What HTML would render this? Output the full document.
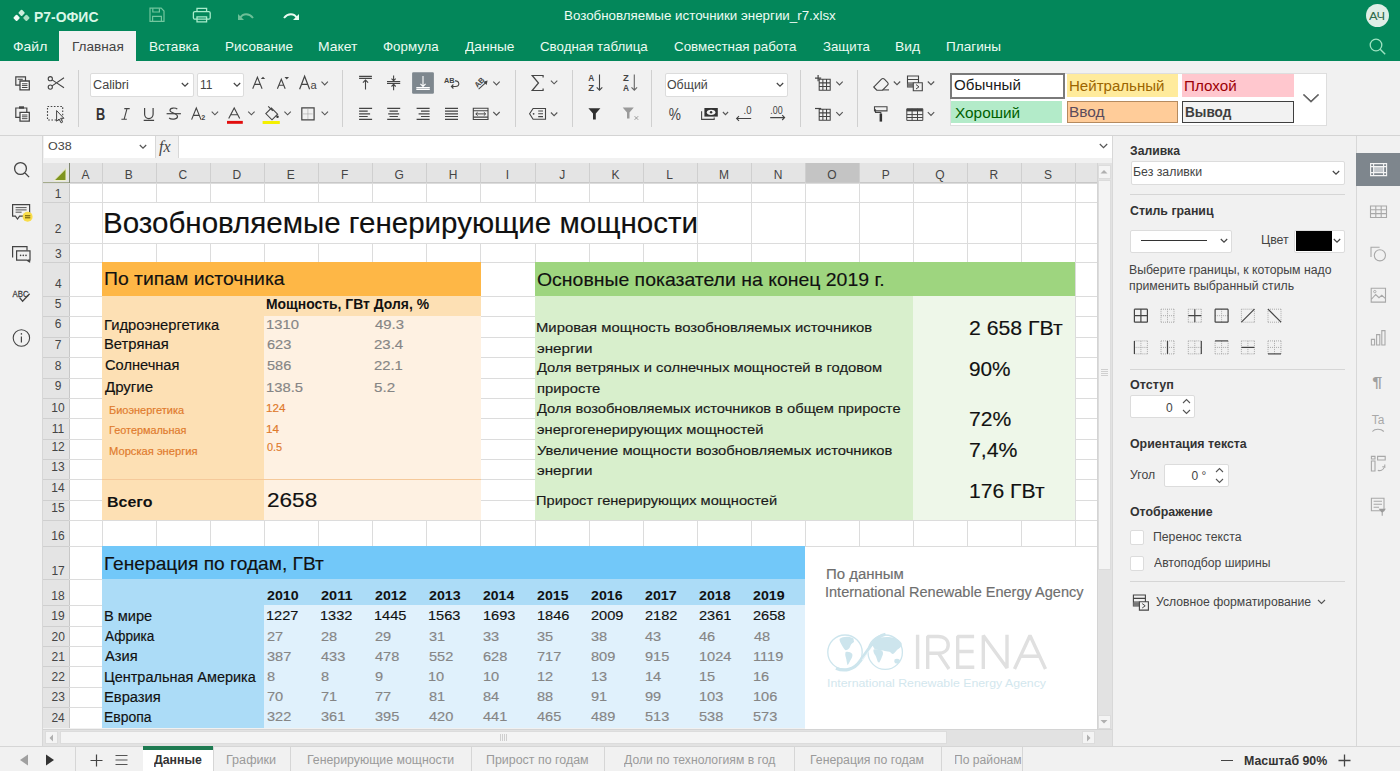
<!DOCTYPE html>
<html><head><meta charset="utf-8"><style>
*{margin:0;padding:0}
html,body{width:1400px;height:771px;overflow:hidden;background:#f1f1f1;position:relative;font-family:"Liberation Sans",sans-serif}
.t{position:absolute;white-space:nowrap;line-height:1;transform-origin:0 0}
.b{position:absolute}
.c{-webkit-text-stroke:0.15px currentColor}
svg.b{overflow:visible}
</style></head><body>
<div class="b" style="left:0px;top:0px;width:1400px;height:61px;background:#03875a"></div>
<svg class="b" style="left:0px;top:0px;" width="40" height="30" viewBox="0 0 40 30"><rect x="14.1" y="15.4" width="5" height="5" rx="1" transform="rotate(45 16.6 17.9)" fill="#f2fbf6"/><rect x="19.1" y="10.4" width="5" height="5" rx="1" transform="rotate(45 21.6 12.9)" fill="#cdeedd"/><rect x="23.9" y="15.4" width="5" height="5" rx="1" transform="rotate(45 26.4 17.9)" fill="#a9dfc3"/></svg>
<div class="t" style="left:34.06px;top:8.6px;font-size:15px;color:#d9f7e7;font-weight:bold;transform:scaleX(0.928);">Р7-ОФИС</div>
<svg class="b" style="left:149px;top:7px;" width="18" height="16" viewBox="0 0 18 16"><g fill="none" stroke="#72c69e" stroke-width="1.2"><path d="M1 1.2h11.2l2.8 2.8v10.4H1z"/><path d="M3.8 1.2v3.8h6.6V1.2"/><path d="M3.6 14.4V9.4h8.8v5"/></g></svg>
<svg class="b" style="left:192px;top:7px;" width="20" height="17" viewBox="0 0 20 17"><g fill="none" stroke="#a9eccb" stroke-width="1.3"><path d="M5 4.6V1.4h9.6v3.2"/><rect x="1.4" y="4.6" width="16.8" height="7.6" rx="1.5"/><path d="M5 9.8h9.6v5H5z"/></g></svg>
<svg class="b" style="left:237px;top:11px;" width="18" height="12" viewBox="0 0 18 12"><path d="M3 7c3-5 9-5 13 0" fill="none" stroke="#6cbf97" stroke-width="2"/><path d="M1 3v6h6z" fill="#6cbf97"/></svg>
<svg class="b" style="left:282px;top:11px;" width="18" height="12" viewBox="0 0 18 12"><path d="M15 7c-3-5-9-5-13 0" fill="none" stroke="#e9fbf1" stroke-width="2"/><path d="M17 3v6h-6z" fill="#e9fbf1"/></svg>
<div class="t" style="left:563.90px;top:9.4px;font-size:13px;color:#eefcf4;transform:scaleX(1.026);">Возобновляемые источники энергии_r7.xlsx</div>
<div class="b" style="left:1366px;top:4px;width:23px;height:23px;border-radius:50%;background:#dfeee6"></div>
<div class="t" style="left:1369.47px;top:10.7px;font-size:11px;color:#2e6b4c;transform:scaleX(1.163);">АЧ</div>
<svg class="b" style="left:1368px;top:37px;" width="20" height="20" viewBox="0 0 20 20"><circle cx="8" cy="8" r="5.8" fill="none" stroke="#9fe3c2" stroke-width="1.3"/><path d="M12.2 12.2l5 5" stroke="#9fe3c2" stroke-width="1.4"/></svg>
<div class="b" style="left:59px;top:31px;width:77px;height:30px;background:#f1f1f1"></div>
<div class="t" style="left:12.95px;top:40.2px;font-size:13px;color:#ecfbf2;transform:scaleX(1.072);">Файл</div>
<div class="t" style="left:71.78px;top:40.2px;font-size:13px;color:#444;transform:scaleX(1.046);">Главная</div>
<div class="t" style="left:148.88px;top:40.2px;font-size:13px;color:#ecfbf2;transform:scaleX(1.042);">Вставка</div>
<div class="t" style="left:225.14px;top:40.2px;font-size:13px;color:#ecfbf2;transform:scaleX(1.038);">Рисование</div>
<div class="t" style="left:318.35px;top:40.2px;font-size:13px;color:#ecfbf2;transform:scaleX(1.071);">Макет</div>
<div class="t" style="left:382.98px;top:40.2px;font-size:13px;color:#ecfbf2;transform:scaleX(1.024);">Формула</div>
<div class="t" style="left:464.90px;top:40.2px;font-size:13px;color:#ecfbf2;transform:scaleX(1.053);">Данные</div>
<div class="t" style="left:539.83px;top:40.2px;font-size:13px;color:#ecfbf2;transform:scaleX(1.024);">Сводная таблица</div>
<div class="t" style="left:673.83px;top:40.2px;font-size:13px;color:#ecfbf2;transform:scaleX(1.029);">Совместная работа</div>
<div class="t" style="left:822.57px;top:40.2px;font-size:13px;color:#ecfbf2;transform:scaleX(1.018);">Защита</div>
<div class="t" style="left:895.10px;top:40.2px;font-size:13px;color:#ecfbf2;transform:scaleX(1.068);">Вид</div>
<div class="t" style="left:946.41px;top:40.2px;font-size:13px;color:#ecfbf2;transform:scaleX(1.044);">Плагины</div>
<div class="b" style="left:0px;top:61px;width:1400px;height:75px;background:#f1f1f1"></div>
<div class="b" style="left:0px;top:135px;width:1400px;height:1px;background:#d4d4d4"></div>
<div class="b" style="left:78px;top:70px;width:1px;height:57px;background:#d0d0d0"></div>
<div class="b" style="left:342px;top:70px;width:1px;height:57px;background:#d0d0d0"></div>
<div class="b" style="left:515px;top:70px;width:1px;height:57px;background:#d0d0d0"></div>
<div class="b" style="left:572px;top:70px;width:1px;height:57px;background:#d0d0d0"></div>
<div class="b" style="left:651px;top:70px;width:1px;height:57px;background:#d0d0d0"></div>
<div class="b" style="left:800px;top:70px;width:1px;height:57px;background:#d0d0d0"></div>
<div class="b" style="left:857px;top:70px;width:1px;height:57px;background:#d0d0d0"></div>
<div class="b" style="left:90px;top:73px;width:103.5px;height:23.5px;background:#fff;border:1px solid #dcdcdc;box-sizing:border-box;border-radius:2px"></div>
<svg class="b" style="left:180.8px;top:81.75px;" width="8" height="6" viewBox="0 0 8 6"><path d="M0.8 1l3.2 3.2 3.2-3.2" fill="none" stroke="#444" stroke-width="1.2"/></svg>
<div class="t" style="left:93.47px;top:78.5px;font-size:12px;color:#444;transform:scaleX(1.055);">Calibri</div>
<div class="b" style="left:196.7px;top:73px;width:47.6px;height:23.5px;background:#fff;border:1px solid #dcdcdc;box-sizing:border-box;border-radius:2px"></div>
<svg class="b" style="left:232.8px;top:81.75px;" width="8" height="6" viewBox="0 0 8 6"><path d="M0.8 1l3.2 3.2 3.2-3.2" fill="none" stroke="#444" stroke-width="1.2"/></svg>
<div class="t" style="left:199.90px;top:78.5px;font-size:12px;color:#444;">11</div>
<div class="b" style="left:664.5px;top:73px;width:123.8px;height:23.5px;background:#fff;border:1px solid #dcdcdc;box-sizing:border-box;border-radius:2px"></div>
<svg class="b" style="left:775.8px;top:81.75px;" width="8" height="6" viewBox="0 0 8 6"><path d="M0.8 1l3.2 3.2 3.2-3.2" fill="none" stroke="#444" stroke-width="1.2"/></svg>
<div class="t" style="left:667.41px;top:78.5px;font-size:12px;color:#444;transform:scaleX(1.031);">Общий</div>
<div class="b" style="left:949.5px;top:72.5px;width:377px;height:53px;background:#fff;border:1px solid #dedede;box-sizing:border-box"></div>
<div class="b" style="left:950px;top:73px;width:114.5px;height:25.5px;background:#fff;border:2px solid #7a7a7a;box-sizing:border-box"></div>
<div class="b" style="left:951.3px;top:101.2px;width:110.7px;height:21.8px;background:#b3ebc9"></div>
<div class="b" style="left:1067px;top:73.6px;width:111.4px;height:23.4px;background:#ffeb9c"></div>
<div class="b" style="left:1182px;top:73.6px;width:111.6px;height:23.4px;background:#ffc7ce"></div>
<div class="b" style="left:1067px;top:101px;width:111.4px;height:21.6px;background:#ffcc99;border:1px solid #b58a5f;box-sizing:border-box"></div>
<div class="b" style="left:1182px;top:101px;width:111.6px;height:21.6px;background:#f2f2f2;border:1px solid #3f3f3f;box-sizing:border-box"></div>
<div class="t" style="left:954.48px;top:78.4px;font-size:14px;color:#1a1a1a;transform:scaleX(1.080);">Обычный</div>
<div class="t" style="left:1069.16px;top:79.1px;font-size:14px;color:#9c6500;transform:scaleX(1.075);">Нейтральный</div>
<div class="t" style="left:1184.38px;top:79.1px;font-size:14px;color:#9c0006;transform:scaleX(1.087);">Плохой</div>
<div class="t" style="left:954.85px;top:106.0px;font-size:14px;color:#006100;transform:scaleX(1.097);">Хороший</div>
<div class="t" style="left:1069.13px;top:105.1px;font-size:14px;color:#5a4b5c;transform:scaleX(1.100);">Ввод</div>
<div class="t" style="left:1185.48px;top:105.1px;font-size:14px;color:#3f3f3f;font-weight:bold;transform:scaleX(0.971);">Вывод</div>
<svg class="b" style="left:1302px;top:93px;" width="18" height="10" viewBox="0 0 18 10"><path d="M1.5 1.5l7.5 7 7.5-7" fill="none" stroke="#555" stroke-width="1.3"/></svg>
<div class="b" style="left:43px;top:136px;width:1069px;height:27px;background:#f1f1f1"></div>
<div class="b" style="left:44px;top:136.3px;width:111px;height:22px;background:#fff"></div>
<div class="t" style="left:48.31px;top:141.3px;font-size:11px;color:#444;transform:scaleX(1.136);">O38</div>
<svg class="b" style="left:139px;top:144px;" width="8" height="6" viewBox="0 0 8 6"><path d="M0.8 1l3.2 3.2 3.2-3.2" fill="none" stroke="#555" stroke-width="1.2"/></svg>
<div class="b" style="left:155px;top:136.3px;width:22.4px;height:22px;background:#f1f1f1;border-left:1px solid #d8d8d8;box-sizing:border-box"></div>
<div class="t" style="left:159px;top:138px;font-family:'Liberation Serif',serif;font-style:italic;font-size:16px;color:#444;line-height:18px">fx</div>
<div class="b" style="left:177.5px;top:136.3px;width:934.5px;height:22px;background:#fff;border-left:1px solid #d8d8d8;box-sizing:border-box"></div>
<svg class="b" style="left:1099px;top:143px;" width="9" height="6" viewBox="0 0 9 6"><path d="M0.8 1l3.7 3.7 3.7-3.7" fill="none" stroke="#555" stroke-width="1.2"/></svg>
<div class="b" style="left:0px;top:136px;width:43px;height:610px;background:#f1f1f1;border-right:1px solid #d6d6d6;box-sizing:border-box"></div>
<div class="b" style="left:43px;top:163px;width:1054px;height:565px;background:#fff"></div>
<div class="b" style="left:43px;top:163px;width:1054px;height:20px;background:#e4e4e4"></div>
<div class="b" style="left:43px;top:183px;width:26px;height:545px;background:#e4e4e4"></div>
<div class="b" style="left:805px;top:163px;width:54px;height:20px;background:#c4c4c4"></div>
<div class="b" style="left:102px;top:163px;width:1px;height:565px;background:#dcdcdc"></div>
<div class="b" style="left:156px;top:163px;width:1px;height:565px;background:#dcdcdc"></div>
<div class="b" style="left:210px;top:163px;width:1px;height:565px;background:#dcdcdc"></div>
<div class="b" style="left:264px;top:163px;width:1px;height:565px;background:#dcdcdc"></div>
<div class="b" style="left:318px;top:163px;width:1px;height:565px;background:#dcdcdc"></div>
<div class="b" style="left:372px;top:163px;width:1px;height:565px;background:#dcdcdc"></div>
<div class="b" style="left:426px;top:163px;width:1px;height:565px;background:#dcdcdc"></div>
<div class="b" style="left:480px;top:163px;width:1px;height:565px;background:#dcdcdc"></div>
<div class="b" style="left:535px;top:163px;width:1px;height:565px;background:#dcdcdc"></div>
<div class="b" style="left:589px;top:163px;width:1px;height:565px;background:#dcdcdc"></div>
<div class="b" style="left:643px;top:163px;width:1px;height:565px;background:#dcdcdc"></div>
<div class="b" style="left:697px;top:163px;width:1px;height:565px;background:#dcdcdc"></div>
<div class="b" style="left:751px;top:163px;width:1px;height:565px;background:#dcdcdc"></div>
<div class="b" style="left:805px;top:163px;width:1px;height:565px;background:#dcdcdc"></div>
<div class="b" style="left:859px;top:163px;width:1px;height:565px;background:#dcdcdc"></div>
<div class="b" style="left:913px;top:163px;width:1px;height:565px;background:#dcdcdc"></div>
<div class="b" style="left:967px;top:163px;width:1px;height:565px;background:#dcdcdc"></div>
<div class="b" style="left:1021px;top:163px;width:1px;height:565px;background:#dcdcdc"></div>
<div class="b" style="left:1075px;top:163px;width:1px;height:565px;background:#dcdcdc"></div>
<div class="b" style="left:69px;top:163px;width:1px;height:565px;background:#c8c8c8"></div>
<div class="b" style="left:43px;top:183px;width:1054px;height:1px;background:#dcdcdc"></div>
<div class="b" style="left:43px;top:202px;width:1054px;height:1px;background:#dcdcdc"></div>
<div class="b" style="left:43px;top:243px;width:1054px;height:1px;background:#dcdcdc"></div>
<div class="b" style="left:43px;top:262px;width:1054px;height:1px;background:#dcdcdc"></div>
<div class="b" style="left:43px;top:296px;width:1054px;height:1px;background:#dcdcdc"></div>
<div class="b" style="left:43px;top:316px;width:1054px;height:1px;background:#dcdcdc"></div>
<div class="b" style="left:43px;top:337px;width:1054px;height:1px;background:#dcdcdc"></div>
<div class="b" style="left:43px;top:357px;width:1054px;height:1px;background:#dcdcdc"></div>
<div class="b" style="left:43px;top:378px;width:1054px;height:1px;background:#dcdcdc"></div>
<div class="b" style="left:43px;top:398px;width:1054px;height:1px;background:#dcdcdc"></div>
<div class="b" style="left:43px;top:418px;width:1054px;height:1px;background:#dcdcdc"></div>
<div class="b" style="left:43px;top:439px;width:1054px;height:1px;background:#dcdcdc"></div>
<div class="b" style="left:43px;top:459px;width:1054px;height:1px;background:#dcdcdc"></div>
<div class="b" style="left:43px;top:479px;width:1054px;height:1px;background:#dcdcdc"></div>
<div class="b" style="left:43px;top:500px;width:1054px;height:1px;background:#dcdcdc"></div>
<div class="b" style="left:43px;top:520px;width:1054px;height:1px;background:#dcdcdc"></div>
<div class="b" style="left:43px;top:546px;width:1054px;height:1px;background:#dcdcdc"></div>
<div class="b" style="left:43px;top:579px;width:1054px;height:1px;background:#dcdcdc"></div>
<div class="b" style="left:43px;top:605px;width:1054px;height:1px;background:#dcdcdc"></div>
<div class="b" style="left:43px;top:626px;width:1054px;height:1px;background:#dcdcdc"></div>
<div class="b" style="left:43px;top:646px;width:1054px;height:1px;background:#dcdcdc"></div>
<div class="b" style="left:43px;top:666px;width:1054px;height:1px;background:#dcdcdc"></div>
<div class="b" style="left:43px;top:687px;width:1054px;height:1px;background:#dcdcdc"></div>
<div class="b" style="left:43px;top:707px;width:1054px;height:1px;background:#dcdcdc"></div>
<div class="b" style="left:43px;top:182px;width:1054px;height:1px;background:#c8c8c8"></div>
<div class="b" style="left:102px;top:163px;width:1px;height:20px;background:#cfcfcf"></div>
<div class="b" style="left:156px;top:163px;width:1px;height:20px;background:#cfcfcf"></div>
<div class="b" style="left:210px;top:163px;width:1px;height:20px;background:#cfcfcf"></div>
<div class="b" style="left:264px;top:163px;width:1px;height:20px;background:#cfcfcf"></div>
<div class="b" style="left:318px;top:163px;width:1px;height:20px;background:#cfcfcf"></div>
<div class="b" style="left:372px;top:163px;width:1px;height:20px;background:#cfcfcf"></div>
<div class="b" style="left:426px;top:163px;width:1px;height:20px;background:#cfcfcf"></div>
<div class="b" style="left:480px;top:163px;width:1px;height:20px;background:#cfcfcf"></div>
<div class="b" style="left:535px;top:163px;width:1px;height:20px;background:#cfcfcf"></div>
<div class="b" style="left:589px;top:163px;width:1px;height:20px;background:#cfcfcf"></div>
<div class="b" style="left:643px;top:163px;width:1px;height:20px;background:#cfcfcf"></div>
<div class="b" style="left:697px;top:163px;width:1px;height:20px;background:#cfcfcf"></div>
<div class="b" style="left:751px;top:163px;width:1px;height:20px;background:#cfcfcf"></div>
<div class="b" style="left:805px;top:163px;width:1px;height:20px;background:#cfcfcf"></div>
<div class="b" style="left:859px;top:163px;width:1px;height:20px;background:#cfcfcf"></div>
<div class="b" style="left:913px;top:163px;width:1px;height:20px;background:#cfcfcf"></div>
<div class="b" style="left:967px;top:163px;width:1px;height:20px;background:#cfcfcf"></div>
<div class="b" style="left:1021px;top:163px;width:1px;height:20px;background:#cfcfcf"></div>
<div class="b" style="left:1075px;top:163px;width:1px;height:20px;background:#cfcfcf"></div>
<div class="b" style="left:43px;top:202px;width:26px;height:1px;background:#cfcfcf"></div>
<div class="b" style="left:43px;top:243px;width:26px;height:1px;background:#cfcfcf"></div>
<div class="b" style="left:43px;top:262px;width:26px;height:1px;background:#cfcfcf"></div>
<div class="b" style="left:43px;top:296px;width:26px;height:1px;background:#cfcfcf"></div>
<div class="b" style="left:43px;top:316px;width:26px;height:1px;background:#cfcfcf"></div>
<div class="b" style="left:43px;top:337px;width:26px;height:1px;background:#cfcfcf"></div>
<div class="b" style="left:43px;top:357px;width:26px;height:1px;background:#cfcfcf"></div>
<div class="b" style="left:43px;top:378px;width:26px;height:1px;background:#cfcfcf"></div>
<div class="b" style="left:43px;top:398px;width:26px;height:1px;background:#cfcfcf"></div>
<div class="b" style="left:43px;top:418px;width:26px;height:1px;background:#cfcfcf"></div>
<div class="b" style="left:43px;top:439px;width:26px;height:1px;background:#cfcfcf"></div>
<div class="b" style="left:43px;top:459px;width:26px;height:1px;background:#cfcfcf"></div>
<div class="b" style="left:43px;top:479px;width:26px;height:1px;background:#cfcfcf"></div>
<div class="b" style="left:43px;top:500px;width:26px;height:1px;background:#cfcfcf"></div>
<div class="b" style="left:43px;top:520px;width:26px;height:1px;background:#cfcfcf"></div>
<div class="b" style="left:43px;top:546px;width:26px;height:1px;background:#cfcfcf"></div>
<div class="b" style="left:43px;top:579px;width:26px;height:1px;background:#cfcfcf"></div>
<div class="b" style="left:43px;top:605px;width:26px;height:1px;background:#cfcfcf"></div>
<div class="b" style="left:43px;top:626px;width:26px;height:1px;background:#cfcfcf"></div>
<div class="b" style="left:43px;top:646px;width:26px;height:1px;background:#cfcfcf"></div>
<div class="b" style="left:43px;top:666px;width:26px;height:1px;background:#cfcfcf"></div>
<div class="b" style="left:43px;top:687px;width:26px;height:1px;background:#cfcfcf"></div>
<div class="b" style="left:43px;top:707px;width:26px;height:1px;background:#cfcfcf"></div>
<div class="b" style="left:43px;top:181.5px;width:27px;height:1.5px;background:#a4ab8c"></div>
<div class="b" style="left:68.5px;top:163px;width:1.5px;height:20px;background:#7f8770"></div>
<svg class="b" style="left:53px;top:168px;" width="14" height="13" viewBox="0 0 14 13"><path d="M13 0.5V12.5H1z" fill="#7f941f" stroke="#eef0cf" stroke-width="1"/></svg>
<div class="t" style="left:81.50px;top:168.8px;font-size:12px;color:#444;">A</div>
<div class="t" style="left:124.82px;top:168.8px;font-size:12px;color:#444;">B</div>
<div class="t" style="left:178.59px;top:168.8px;font-size:12px;color:#444;">C</div>
<div class="t" style="left:232.45px;top:168.8px;font-size:12px;color:#444;">D</div>
<div class="t" style="left:286.75px;top:168.8px;font-size:12px;color:#444;">E</div>
<div class="t" style="left:341.08px;top:168.8px;font-size:12px;color:#444;">F</div>
<div class="t" style="left:394.48px;top:168.8px;font-size:12px;color:#444;">G</div>
<div class="t" style="left:448.66px;top:168.8px;font-size:12px;color:#444;">H</div>
<div class="t" style="left:505.83px;top:168.8px;font-size:12px;color:#444;">I</div>
<div class="t" style="left:559.36px;top:168.8px;font-size:12px;color:#444;">J</div>
<div class="t" style="left:611.58px;top:168.8px;font-size:12px;color:#444;">K</div>
<div class="t" style="left:666.37px;top:168.8px;font-size:12px;color:#444;">L</div>
<div class="t" style="left:719.00px;top:168.8px;font-size:12px;color:#444;">M</div>
<div class="t" style="left:773.66px;top:168.8px;font-size:12px;color:#444;">N</div>
<div class="t" style="left:827.33px;top:168.8px;font-size:12px;color:#444;">O</div>
<div class="t" style="left:881.81px;top:168.8px;font-size:12px;color:#444;">P</div>
<div class="t" style="left:935.33px;top:168.8px;font-size:12px;color:#444;">Q</div>
<div class="t" style="left:989.46px;top:168.8px;font-size:12px;color:#444;">R</div>
<div class="t" style="left:1044.00px;top:168.8px;font-size:12px;color:#444;">S</div>
<div class="t" style="left:54.71px;top:188.3px;font-size:12px;color:#444;">1</div>
<div class="t" style="left:54.87px;top:223.1px;font-size:12px;color:#444;">2</div>
<div class="t" style="left:54.90px;top:247.8px;font-size:12px;color:#444;">3</div>
<div class="t" style="left:54.90px;top:278.4px;font-size:12px;color:#444;">4</div>
<div class="t" style="left:54.87px;top:298.4px;font-size:12px;color:#444;">5</div>
<div class="t" style="left:54.83px;top:318.3px;font-size:12px;color:#444;">6</div>
<div class="t" style="left:54.87px;top:338.9px;font-size:12px;color:#444;">7</div>
<div class="t" style="left:54.87px;top:359.6px;font-size:12px;color:#444;">8</div>
<div class="t" style="left:54.86px;top:380.3px;font-size:12px;color:#444;">9</div>
<div class="t" style="left:51.32px;top:401.8px;font-size:12px;color:#444;">10</div>
<div class="t" style="left:51.81px;top:422.5px;font-size:12px;color:#444;">11</div>
<div class="t" style="left:51.39px;top:441.2px;font-size:12px;color:#444;">12</div>
<div class="t" style="left:51.35px;top:461.4px;font-size:12px;color:#444;">13</div>
<div class="t" style="left:51.26px;top:481.7px;font-size:12px;color:#444;">14</div>
<div class="t" style="left:51.33px;top:501.5px;font-size:12px;color:#444;">15</div>
<div class="t" style="left:51.35px;top:530.3px;font-size:12px;color:#444;">16</div>
<div class="t" style="left:51.39px;top:565.3px;font-size:12px;color:#444;">17</div>
<div class="t" style="left:51.35px;top:590.2px;font-size:12px;color:#444;">18</div>
<div class="t" style="left:51.36px;top:610.4px;font-size:12px;color:#444;">19</div>
<div class="t" style="left:51.47px;top:630.6px;font-size:12px;color:#444;">20</div>
<div class="t" style="left:51.52px;top:650.9px;font-size:12px;color:#444;">21</div>
<div class="t" style="left:51.54px;top:671.1px;font-size:12px;color:#444;">22</div>
<div class="t" style="left:51.49px;top:691.4px;font-size:12px;color:#444;">23</div>
<div class="t" style="left:51.41px;top:711.5px;font-size:12px;color:#444;">24</div>
<div class="b" style="left:103px;top:203px;width:593px;height:40px;background:#fff"></div>
<div class="b" style="left:102px;top:262px;width:379px;height:34px;background:#feb746"></div>
<div class="b" style="left:102px;top:296px;width:379px;height:224px;background:#fde0b4"></div>
<div class="b" style="left:264px;top:316px;width:217px;height:204px;background:#fef1e2"></div>
<div class="b" style="left:102px;top:479px;width:379px;height:1px;background:#f5c99a"></div>
<div class="b" style="left:535px;top:262px;width:540px;height:34px;background:#9ed57f"></div>
<div class="b" style="left:535px;top:296px;width:378px;height:224px;background:#d8efcc"></div>
<div class="b" style="left:913px;top:296px;width:162px;height:224px;background:#eef7e9"></div>
<div class="b" style="left:102px;top:546px;width:703px;height:33px;background:#72c8f9"></div>
<div class="b" style="left:102px;top:579px;width:703px;height:149px;background:#acdcf7"></div>
<div class="b" style="left:264px;top:605px;width:541px;height:123px;background:#e0f1fc"></div>
<div class="b" style="left:805px;top:546.5px;width:292px;height:182.5px;background:#fff"></div>
<div class="t c" style="left:103.06px;top:208.3px;font-size:29.8px;color:#111;transform:scaleX(0.991);">Возобновляемые генерирующие мощности</div>
<div class="t c" style="left:103.75px;top:269.4px;font-size:19px;color:#111;transform:scaleX(1.020);">По типам источника</div>
<div class="t" style="left:266.36px;top:297.7px;font-size:13.8px;color:#111;font-weight:bold;transform:scaleX(1.008);">Мощность, ГВт Доля, %</div>
<div class="t c" style="left:104.08px;top:317.5px;font-size:14px;color:#111;transform:scaleX(1.053);">Гидроэнергетика</div>
<div class="t c" style="left:266.19px;top:318.4px;font-size:13px;color:#858585;transform:scaleX(1.137);">1310</div>
<div class="t c" style="left:374.56px;top:318.4px;font-size:13px;color:#858585;transform:scaleX(1.146);">49.3</div>
<div class="t c" style="left:104.08px;top:337.4px;font-size:14px;color:#111;transform:scaleX(1.055);">Ветряная</div>
<div class="t c" style="left:266.57px;top:338.3px;font-size:13px;color:#858585;transform:scaleX(1.123);">623</div>
<div class="t c" style="left:374.15px;top:338.3px;font-size:13px;color:#858585;transform:scaleX(1.153);">23.4</div>
<div class="t c" style="left:104.57px;top:358.1px;font-size:14px;color:#111;transform:scaleX(1.045);">Солнечная</div>
<div class="t c" style="left:266.72px;top:359.0px;font-size:13px;color:#858585;transform:scaleX(1.116);">586</div>
<div class="t c" style="left:374.16px;top:359.0px;font-size:13px;color:#858585;transform:scaleX(1.141);">22.1</div>
<div class="t c" style="left:105.19px;top:379.7px;font-size:14px;color:#111;transform:scaleX(1.073);">Другие</div>
<div class="t c" style="left:266.19px;top:380.6px;font-size:13px;color:#858585;transform:scaleX(1.137);">138.5</div>
<div class="t c" style="left:374.29px;top:380.6px;font-size:13px;color:#858585;transform:scaleX(1.166);">5.2</div>
<div class="t c" style="left:109.29px;top:406.2px;font-size:10px;color:#e07a2c;transform:scaleX(1.097);">Биоэнергетика</div>
<div class="t c" style="left:266.13px;top:404.0px;font-size:10px;color:#e07a2c;transform:scaleX(1.163);">124</div>
<div class="t c" style="left:109.30px;top:426.4px;font-size:10px;color:#e07a2c;transform:scaleX(1.088);">Геотермальная</div>
<div class="t c" style="left:266.12px;top:424.7px;font-size:10px;color:#e07a2c;transform:scaleX(1.171);">14</div>
<div class="t c" style="left:109.28px;top:446.7px;font-size:10px;color:#e07a2c;transform:scaleX(1.116);">Морская энергия</div>
<div class="t c" style="left:266.56px;top:442.8px;font-size:10px;color:#e07a2c;transform:scaleX(1.092);">0.5</div>
<div class="t" style="left:107.42px;top:494.5px;font-size:14px;color:#111;font-weight:bold;transform:scaleX(1.141);">Всего</div>
<div class="t c" style="left:266.67px;top:489.1px;font-size:21px;color:#111;transform:scaleX(1.075);">2658</div>
<div class="t c" style="left:536.68px;top:269.9px;font-size:19px;color:#111;transform:scaleX(1.023);">Основные показатели на конец 2019 г.</div>
<div class="t c" style="left:536.38px;top:321.0px;font-size:13.5px;color:#1a1a1a;transform:scaleX(1.099);">Мировая мощность возобновляемых источников</div>
<div class="t c" style="left:537.18px;top:341.7px;font-size:13.5px;color:#1a1a1a;transform:scaleX(1.124);">энергии</div>
<div class="t c" style="left:537.49px;top:361.4px;font-size:13.5px;color:#1a1a1a;transform:scaleX(1.089);">Доля ветряных и солнечных мощностей в годовом</div>
<div class="t c" style="left:536.56px;top:381.8px;font-size:13.5px;color:#1a1a1a;transform:scaleX(1.098);">приросте</div>
<div class="t c" style="left:537.49px;top:402.4px;font-size:13.5px;color:#1a1a1a;transform:scaleX(1.087);">Доля возобновляемых источников в общем приросте</div>
<div class="t c" style="left:537.20px;top:422.7px;font-size:13.5px;color:#1a1a1a;transform:scaleX(1.090);">энергогенерирующих мощностей</div>
<div class="t c" style="left:537.19px;top:443.6px;font-size:13.5px;color:#1a1a1a;transform:scaleX(1.093);">Увеличение мощности возобновляемых источников</div>
<div class="t c" style="left:537.18px;top:463.9px;font-size:13.5px;color:#1a1a1a;transform:scaleX(1.124);">энергии</div>
<div class="t c" style="left:536.43px;top:494.3px;font-size:13.5px;color:#1a1a1a;transform:scaleX(1.083);">Прирост генерирующих мощностей</div>
<div class="t c" style="left:969.24px;top:316.7px;font-size:21px;color:#111;transform:scaleX(1.012);">2 658 ГВт</div>
<div class="t c" style="left:969.31px;top:357.7px;font-size:21px;color:#111;transform:scaleX(0.990);">90%</div>
<div class="t c" style="left:969.24px;top:408.3px;font-size:21px;color:#111;transform:scaleX(1.006);">72%</div>
<div class="t c" style="left:969.24px;top:438.8px;font-size:21px;color:#111;transform:scaleX(1.013);">7,4%</div>
<div class="t c" style="left:968.72px;top:480.0px;font-size:21px;color:#111;transform:scaleX(1.006);">176 ГВт</div>
<div class="t c" style="left:103.52px;top:554.1px;font-size:19px;color:#111;transform:scaleX(1.009);">Генерация по годам, ГВт</div>
<div class="t" style="left:266.90px;top:588.8px;font-size:13.5px;color:#111;font-weight:bold;transform:scaleX(1.055);">2010</div>
<div class="t" style="left:320.94px;top:588.8px;font-size:13.5px;color:#111;font-weight:bold;transform:scaleX(1.077);">2011</div>
<div class="t" style="left:375.00px;top:588.8px;font-size:13.5px;color:#111;font-weight:bold;transform:scaleX(1.054);">2012</div>
<div class="t" style="left:429.05px;top:588.8px;font-size:13.5px;color:#111;font-weight:bold;transform:scaleX(1.053);">2013</div>
<div class="t" style="left:483.11px;top:588.8px;font-size:13.5px;color:#111;font-weight:bold;transform:scaleX(1.039);">2014</div>
<div class="t" style="left:537.15px;top:588.8px;font-size:13.5px;color:#111;font-weight:bold;transform:scaleX(1.049);">2015</div>
<div class="t" style="left:591.20px;top:588.8px;font-size:13.5px;color:#111;font-weight:bold;transform:scaleX(1.053);">2016</div>
<div class="t" style="left:645.25px;top:588.8px;font-size:13.5px;color:#111;font-weight:bold;transform:scaleX(1.057);">2017</div>
<div class="t" style="left:699.30px;top:588.8px;font-size:13.5px;color:#111;font-weight:bold;transform:scaleX(1.051);">2018</div>
<div class="t" style="left:753.35px;top:588.8px;font-size:13.5px;color:#111;font-weight:bold;transform:scaleX(1.053);">2019</div>
<div class="t c" style="left:103.80px;top:608.9px;font-size:14px;color:#111;transform:scaleX(1.043);">В мире</div>
<div class="t c" style="left:266.31px;top:609.4px;font-size:13.5px;color:#111;transform:scaleX(1.080);">1227</div>
<div class="t c" style="left:320.36px;top:609.4px;font-size:13.5px;color:#111;transform:scaleX(1.080);">1332</div>
<div class="t c" style="left:374.41px;top:609.4px;font-size:13.5px;color:#111;transform:scaleX(1.080);">1445</div>
<div class="t c" style="left:428.46px;top:609.4px;font-size:13.5px;color:#111;transform:scaleX(1.080);">1563</div>
<div class="t c" style="left:482.51px;top:609.4px;font-size:13.5px;color:#111;transform:scaleX(1.080);">1693</div>
<div class="t c" style="left:536.56px;top:609.4px;font-size:13.5px;color:#111;transform:scaleX(1.080);">1846</div>
<div class="t c" style="left:590.97px;top:609.4px;font-size:13.5px;color:#111;transform:scaleX(1.080);">2009</div>
<div class="t c" style="left:645.02px;top:609.4px;font-size:13.5px;color:#111;transform:scaleX(1.080);">2182</div>
<div class="t c" style="left:699.07px;top:609.4px;font-size:13.5px;color:#111;transform:scaleX(1.080);">2361</div>
<div class="t c" style="left:753.12px;top:609.4px;font-size:13.5px;color:#111;transform:scaleX(1.080);">2658</div>
<div class="t c" style="left:104.97px;top:629.1px;font-size:14px;color:#111;transform:scaleX(0.972);">Африка</div>
<div class="t c" style="left:266.67px;top:629.6px;font-size:13.5px;color:#858585;transform:scaleX(1.080);">27</div>
<div class="t c" style="left:320.72px;top:629.6px;font-size:13.5px;color:#858585;transform:scaleX(1.080);">28</div>
<div class="t c" style="left:374.77px;top:629.6px;font-size:13.5px;color:#858585;transform:scaleX(1.080);">29</div>
<div class="t c" style="left:429.00px;top:629.6px;font-size:13.5px;color:#858585;transform:scaleX(1.080);">31</div>
<div class="t c" style="left:483.05px;top:629.6px;font-size:13.5px;color:#858585;transform:scaleX(1.080);">33</div>
<div class="t c" style="left:537.10px;top:629.6px;font-size:13.5px;color:#858585;transform:scaleX(1.080);">35</div>
<div class="t c" style="left:591.15px;top:629.6px;font-size:13.5px;color:#858585;transform:scaleX(1.080);">38</div>
<div class="t c" style="left:645.42px;top:629.6px;font-size:13.5px;color:#858585;transform:scaleX(1.080);">43</div>
<div class="t c" style="left:699.47px;top:629.6px;font-size:13.5px;color:#858585;transform:scaleX(1.080);">46</div>
<div class="t c" style="left:753.52px;top:629.6px;font-size:13.5px;color:#858585;transform:scaleX(1.080);">48</div>
<div class="t c" style="left:104.96px;top:649.3px;font-size:14px;color:#111;transform:scaleX(1.047);">Азия</div>
<div class="t c" style="left:266.85px;top:649.8px;font-size:13.5px;color:#858585;transform:scaleX(1.080);">387</div>
<div class="t c" style="left:321.12px;top:649.8px;font-size:13.5px;color:#858585;transform:scaleX(1.080);">433</div>
<div class="t c" style="left:375.17px;top:649.8px;font-size:13.5px;color:#858585;transform:scaleX(1.080);">478</div>
<div class="t c" style="left:428.97px;top:649.8px;font-size:13.5px;color:#858585;transform:scaleX(1.080);">552</div>
<div class="t c" style="left:482.87px;top:649.8px;font-size:13.5px;color:#858585;transform:scaleX(1.080);">628</div>
<div class="t c" style="left:536.92px;top:649.8px;font-size:13.5px;color:#858585;transform:scaleX(1.080);">717</div>
<div class="t c" style="left:591.08px;top:649.8px;font-size:13.5px;color:#858585;transform:scaleX(1.080);">809</div>
<div class="t c" style="left:645.06px;top:649.8px;font-size:13.5px;color:#858585;transform:scaleX(1.080);">915</div>
<div class="t c" style="left:698.71px;top:649.8px;font-size:13.5px;color:#858585;transform:scaleX(1.080);">1024</div>
<div class="t c" style="left:752.76px;top:649.8px;font-size:13.5px;color:#858585;transform:scaleX(1.080);">1119</div>
<div class="t c" style="left:103.81px;top:669.5px;font-size:14px;color:#111;transform:scaleX(1.033);">Центральная Америка</div>
<div class="t c" style="left:266.78px;top:670.0px;font-size:13.5px;color:#858585;transform:scaleX(1.080);">8</div>
<div class="t c" style="left:320.83px;top:670.0px;font-size:13.5px;color:#858585;transform:scaleX(1.080);">8</div>
<div class="t c" style="left:374.81px;top:670.0px;font-size:13.5px;color:#858585;transform:scaleX(1.080);">9</div>
<div class="t c" style="left:428.46px;top:670.0px;font-size:13.5px;color:#858585;transform:scaleX(1.080);">10</div>
<div class="t c" style="left:482.51px;top:670.0px;font-size:13.5px;color:#858585;transform:scaleX(1.080);">10</div>
<div class="t c" style="left:536.56px;top:670.0px;font-size:13.5px;color:#858585;transform:scaleX(1.080);">12</div>
<div class="t c" style="left:590.61px;top:670.0px;font-size:13.5px;color:#858585;transform:scaleX(1.080);">13</div>
<div class="t c" style="left:644.66px;top:670.0px;font-size:13.5px;color:#858585;transform:scaleX(1.080);">14</div>
<div class="t c" style="left:698.71px;top:670.0px;font-size:13.5px;color:#858585;transform:scaleX(1.080);">15</div>
<div class="t c" style="left:752.76px;top:670.0px;font-size:13.5px;color:#858585;transform:scaleX(1.080);">16</div>
<div class="t c" style="left:103.79px;top:689.7px;font-size:14px;color:#111;transform:scaleX(1.052);">Евразия</div>
<div class="t c" style="left:266.67px;top:690.2px;font-size:13.5px;color:#858585;transform:scaleX(1.080);">70</div>
<div class="t c" style="left:320.72px;top:690.2px;font-size:13.5px;color:#858585;transform:scaleX(1.080);">71</div>
<div class="t c" style="left:374.77px;top:690.2px;font-size:13.5px;color:#858585;transform:scaleX(1.080);">77</div>
<div class="t c" style="left:428.93px;top:690.2px;font-size:13.5px;color:#858585;transform:scaleX(1.080);">81</div>
<div class="t c" style="left:482.98px;top:690.2px;font-size:13.5px;color:#858585;transform:scaleX(1.080);">84</div>
<div class="t c" style="left:537.03px;top:690.2px;font-size:13.5px;color:#858585;transform:scaleX(1.080);">88</div>
<div class="t c" style="left:591.01px;top:690.2px;font-size:13.5px;color:#858585;transform:scaleX(1.080);">91</div>
<div class="t c" style="left:645.06px;top:690.2px;font-size:13.5px;color:#858585;transform:scaleX(1.080);">99</div>
<div class="t c" style="left:698.71px;top:690.2px;font-size:13.5px;color:#858585;transform:scaleX(1.080);">103</div>
<div class="t c" style="left:752.76px;top:690.2px;font-size:13.5px;color:#858585;transform:scaleX(1.080);">106</div>
<div class="t c" style="left:103.85px;top:709.9px;font-size:14px;color:#111;transform:scaleX(0.996);">Европа</div>
<div class="t c" style="left:266.85px;top:710.4px;font-size:13.5px;color:#858585;transform:scaleX(1.080);">322</div>
<div class="t c" style="left:320.90px;top:710.4px;font-size:13.5px;color:#858585;transform:scaleX(1.080);">361</div>
<div class="t c" style="left:374.95px;top:710.4px;font-size:13.5px;color:#858585;transform:scaleX(1.080);">395</div>
<div class="t c" style="left:429.22px;top:710.4px;font-size:13.5px;color:#858585;transform:scaleX(1.080);">420</div>
<div class="t c" style="left:483.27px;top:710.4px;font-size:13.5px;color:#858585;transform:scaleX(1.080);">441</div>
<div class="t c" style="left:537.32px;top:710.4px;font-size:13.5px;color:#858585;transform:scaleX(1.080);">465</div>
<div class="t c" style="left:591.37px;top:710.4px;font-size:13.5px;color:#858585;transform:scaleX(1.080);">489</div>
<div class="t c" style="left:645.17px;top:710.4px;font-size:13.5px;color:#858585;transform:scaleX(1.080);">513</div>
<div class="t c" style="left:699.22px;top:710.4px;font-size:13.5px;color:#858585;transform:scaleX(1.080);">538</div>
<div class="t c" style="left:753.27px;top:710.4px;font-size:13.5px;color:#858585;transform:scaleX(1.080);">573</div>
<div class="t c" style="left:825.60px;top:566.8px;font-size:14px;color:#6e6e6e;transform:scaleX(1.068);">По данным</div>
<div class="t c" style="left:825.46px;top:585.4px;font-size:14px;color:#6e6e6e;transform:scaleX(1.038);">International Renewable Energy Agency</div>
<div class="b" style="left:1097px;top:163px;width:15px;height:583px;background:#e2e2e2;border-left:1px solid #d4d4d4;box-sizing:border-box"></div>
<div class="b" style="left:1097.5px;top:164.7px;width:13px;height:14px;background:#f4f4f4;border:1px solid #dcdcdc;box-sizing:border-box"></div>
<svg class="b" style="left:1100px;top:169px;" width="8" height="6" viewBox="0 0 8 6"><path d="M0.5 4.5L4 1 7.5 4.5z" fill="#b0b0b0"/></svg>
<div class="b" style="left:1097.5px;top:180.2px;width:13px;height:390px;background:#f4f4f4;border:1px solid #dcdcdc;box-sizing:border-box"></div>
<div class="b" style="left:1100.5px;top:369px;width:7px;height:1px;background:#cfcfcf"></div>
<div class="b" style="left:1100.5px;top:371px;width:7px;height:1px;background:#cfcfcf"></div>
<div class="b" style="left:1100.5px;top:373px;width:7px;height:1px;background:#cfcfcf"></div>
<div class="b" style="left:1100.5px;top:375px;width:7px;height:1px;background:#cfcfcf"></div>
<div class="b" style="left:1097.5px;top:715px;width:13px;height:14px;background:#f4f4f4;border:1px solid #dcdcdc;box-sizing:border-box"></div>
<svg class="b" style="left:1100px;top:719px;" width="8" height="6" viewBox="0 0 8 6"><path d="M0.5 1L4 4.5 7.5 1z" fill="#b0b0b0"/></svg>
<div class="b" style="left:43px;top:729px;width:1069px;height:17px;background:#e2e2e2;border-top:1px solid #d4d4d4;box-sizing:border-box"></div>
<div class="b" style="left:45px;top:730.7px;width:13px;height:13.5px;background:#f4f4f4;border:1px solid #dcdcdc;box-sizing:border-box"></div>
<svg class="b" style="left:48px;top:734px;" width="6" height="8" viewBox="0 0 6 8"><path d="M5 0.5L1.5 4 5 7.5z" fill="#b0b0b0"/></svg>
<div class="b" style="left:60px;top:730.7px;width:887px;height:13.5px;background:#f4f4f4;border:1px solid #dcdcdc;box-sizing:border-box"></div>
<div class="b" style="left:500px;top:734px;width:1px;height:7px;background:#cfcfcf"></div>
<div class="b" style="left:502px;top:734px;width:1px;height:7px;background:#cfcfcf"></div>
<div class="b" style="left:504px;top:734px;width:1px;height:7px;background:#cfcfcf"></div>
<div class="b" style="left:506px;top:734px;width:1px;height:7px;background:#cfcfcf"></div>
<div class="b" style="left:1082.4px;top:730.7px;width:13px;height:13.5px;background:#f4f4f4;border:1px solid #dcdcdc;box-sizing:border-box"></div>
<svg class="b" style="left:1086px;top:734px;" width="6" height="8" viewBox="0 0 6 8"><path d="M1 0.5L4.5 4 1 7.5z" fill="#b0b0b0"/></svg>
<div class="b" style="left:1112px;top:136px;width:288px;height:610px;background:#f1f1f1;border-left:1px solid #d8d8d8;box-sizing:border-box"></div>
<div class="b" style="left:1356px;top:136px;width:44px;height:610px;background:#f1f1f1;border-left:1px solid #d8d8d8;box-sizing:border-box"></div>
<div class="b" style="left:1356px;top:153px;width:44px;height:33px;background:#7e868d"></div>
<div class="t" style="left:1129.73px;top:145.1px;font-size:12px;color:#333;font-weight:bold;transform:scaleX(1.015);">Заливка</div>
<div class="b" style="left:1130.5px;top:161px;width:214px;height:23.5px;background:#fff;border:1px solid #dcdcdc;box-sizing:border-box;border-radius:2px"></div>
<svg class="b" style="left:1332px;top:169.75px;" width="8" height="6" viewBox="0 0 8 6"><path d="M0.8 1l3.2 3.2 3.2-3.2" fill="none" stroke="#444" stroke-width="1.2"/></svg>
<div class="t" style="left:1133.48px;top:166.2px;font-size:12px;color:#444;transform:scaleX(1.026);">Без заливки</div>
<div class="b" style="left:1130px;top:194px;width:215px;height:1px;background:#d6d6d6"></div>
<div class="t" style="left:1129.51px;top:204.8px;font-size:12px;color:#333;font-weight:bold;transform:scaleX(1.028);">Стиль границ</div>
<div class="b" style="left:1130.2px;top:229.7px;width:102px;height:23.5px;background:#fff;border:1px solid #dcdcdc;box-sizing:border-box;border-radius:2px"></div>
<svg class="b" style="left:1220px;top:238.45px;" width="8" height="6" viewBox="0 0 8 6"><path d="M0.8 1l3.2 3.2 3.2-3.2" fill="none" stroke="#444" stroke-width="1.2"/></svg>
<div class="b" style="left:1141px;top:240px;width:66px;height:1px;background:#333"></div>
<div class="t" style="left:1261.48px;top:234.0px;font-size:12px;color:#444;transform:scaleX(1.032);">Цвет</div>
<div class="b" style="left:1294.4px;top:229.7px;width:50.2px;height:23.5px;background:#fff;border:1px solid #dcdcdc;box-sizing:border-box;border-radius:2px"></div>
<svg class="b" style="left:1333px;top:238.45px;" width="8" height="6" viewBox="0 0 8 6"><path d="M0.8 1l3.2 3.2 3.2-3.2" fill="none" stroke="#444" stroke-width="1.2"/></svg>
<div class="b" style="left:1296.3px;top:231.3px;width:35.7px;height:20.2px;background:#000"></div>
<div class="t" style="left:1128.99px;top:263.6px;font-size:12px;color:#444;transform:scaleX(1.021);">Выберите границы, к которым надо</div>
<div class="t" style="left:1129.14px;top:280.0px;font-size:12px;color:#444;transform:scaleX(1.020);">применить выбранный стиль</div>
<div class="b" style="left:1130px;top:368.5px;width:215px;height:1px;background:#d6d6d6"></div>
<div class="t" style="left:1129.50px;top:379.4px;font-size:12px;color:#333;font-weight:bold;transform:scaleX(1.046);">Отступ</div>
<div class="b" style="left:1130.2px;top:395.3px;width:65px;height:23px;background:#fff;border:1px solid #dcdcdc;box-sizing:border-box;border-radius:2px"></div>
<div class="t" style="left:1166.02px;top:401.8px;font-size:12px;color:#444;">0</div>
<svg class="b" style="left:1182px;top:398px;" width="9" height="17" viewBox="0 0 9 17"><path d="M1 5l3.5-3.5L8 5M1 12l3.5 3.5L8 12" fill="none" stroke="#555" stroke-width="1.1"/></svg>
<div class="t" style="left:1129.51px;top:437.8px;font-size:12px;color:#333;font-weight:bold;transform:scaleX(1.031);">Ориентация текста</div>
<div class="t" style="left:1129.66px;top:469.3px;font-size:12px;color:#444;transform:scaleX(1.019);">Угол</div>
<div class="b" style="left:1163.6px;top:463.8px;width:65.8px;height:23px;background:#fff;border:1px solid #dcdcdc;box-sizing:border-box;border-radius:2px"></div>
<div class="t" style="left:1191.52px;top:470.3px;font-size:12px;color:#444;">0 °</div>
<svg class="b" style="left:1215px;top:467px;" width="9" height="17" viewBox="0 0 9 17"><path d="M1 5l3.5-3.5L8 5M1 12l3.5 3.5L8 12" fill="none" stroke="#555" stroke-width="1.1"/></svg>
<div class="t" style="left:1129.51px;top:505.9px;font-size:12px;color:#333;font-weight:bold;transform:scaleX(1.031);">Отображение</div>
<div class="b" style="left:1130.4px;top:530.1px;width:14px;height:15px;background:#fff;border:1px solid #dcdcdc;box-sizing:border-box;border-radius:2px"></div>
<div class="t" style="left:1153.42px;top:531.2px;font-size:12px;color:#444;transform:scaleX(1.020);">Перенос текста</div>
<div class="b" style="left:1130.4px;top:556.1px;width:14px;height:15px;background:#fff;border:1px solid #dcdcdc;box-sizing:border-box;border-radius:2px"></div>
<div class="t" style="left:1154.37px;top:556.6px;font-size:12px;color:#444;transform:scaleX(1.016);">Автоподбор ширины</div>
<div class="b" style="left:1130px;top:580.5px;width:215px;height:1px;background:#d6d6d6"></div>
<div class="t" style="left:1155.76px;top:595.5px;font-size:12px;color:#444;transform:scaleX(1.016);">Условное форматирование</div>
<svg class="b" style="left:1316.5px;top:599px;" width="9" height="6" viewBox="0 0 9 6"><path d="M1 1l3.5 3.5L8 1" fill="none" stroke="#555" stroke-width="1.1"/></svg>
<div class="b" style="left:0px;top:746px;width:1400px;height:25px;background:#f1f1f1;border-top:1px solid #d6d6d6;box-sizing:border-box"></div>
<div class="b" style="left:75px;top:746px;width:1px;height:25px;background:#d6d6d6"></div>
<svg class="b" style="left:19px;top:754px;" width="10" height="12" viewBox="0 0 10 12"><path d="M9 0.5v11L1 6z" fill="#a0a0a0"/></svg>
<svg class="b" style="left:45px;top:754px;" width="10" height="12" viewBox="0 0 10 12"><path d="M1 0.5v11L9 6z" fill="#333"/></svg>
<svg class="b" style="left:90px;top:754px;" width="13" height="13" viewBox="0 0 13 13"><path d="M6.5 0.5v12M0.5 6.5h12" stroke="#444" stroke-width="1.2"/></svg>
<svg class="b" style="left:115px;top:754px;" width="13" height="12" viewBox="0 0 13 12"><path d="M0.5 1.5h12M0.5 6h12M0.5 10.5h12" stroke="#555" stroke-width="1.2"/></svg>
<div class="b" style="left:142.5px;top:746px;width:70.5px;height:25px;background:#fff"></div>
<div class="b" style="left:142.5px;top:746px;width:70.5px;height:4px;background:#1e7b52"></div>
<div class="t" style="left:154.01px;top:753.6px;font-size:12px;color:#333;font-weight:bold;transform:scaleX(1.025);">Данные</div>
<div class="b" style="left:213px;top:747px;width:1px;height:24px;background:#d6d6d6"></div>
<div class="b" style="left:289.5px;top:747px;width:1px;height:24px;background:#d6d6d6"></div>
<div class="b" style="left:471px;top:747px;width:1px;height:24px;background:#d6d6d6"></div>
<div class="b" style="left:604px;top:747px;width:1px;height:24px;background:#d6d6d6"></div>
<div class="b" style="left:794px;top:747px;width:1px;height:24px;background:#d6d6d6"></div>
<div class="b" style="left:940.7px;top:747px;width:1px;height:24px;background:#d6d6d6"></div>
<div class="b" style="left:1022px;top:747px;width:1px;height:24px;background:#d6d6d6"></div>
<div class="t" style="left:226.26px;top:753.6px;font-size:12px;color:#9a9a9a;transform:scaleX(1.050);">Графики</div>
<div class="t" style="left:306.88px;top:753.6px;font-size:12px;color:#9a9a9a;transform:scaleX(1.026);">Генерирующие мощности</div>
<div class="t" style="left:486.11px;top:753.6px;font-size:12px;color:#9a9a9a;transform:scaleX(1.035);">Прирост по годам</div>
<div class="t" style="left:623.81px;top:753.6px;font-size:12px;color:#9a9a9a;transform:scaleX(1.014);">Доли по технологиям в год</div>
<div class="t" style="left:810.39px;top:753.6px;font-size:12px;color:#9a9a9a;transform:scaleX(1.023);">Генерация по годам</div>
<div class="b" style="left:954.8px;top:746px;width:67.2px;height:25px;overflow:hidden">
<div class="t" style="left:-0.97px;top:7.6px;font-size:12px;color:#9a9a9a;transform:scaleX(1.012);">По районам</div>
</div>
<div class="b" style="left:1221px;top:760px;width:12px;height:1.3px;background:#444"></div>
<div class="t" style="left:1243.77px;top:754.8px;font-size:12px;color:#333;font-weight:bold;transform:scaleX(1.030);">Масштаб 90%</div>
<svg class="b" style="left:1338px;top:754px;" width="13" height="13" viewBox="0 0 13 13"><path d="M6.5 0.5v12M0.5 6.5h12" stroke="#444" stroke-width="1.3"/></svg>
<svg class="b" style="left:0;top:0" width="1400" height="771" viewBox="0 0 1400 771" font-family="Liberation Sans, sans-serif"><path d="M15.8 76.9h9.7v8.2h-9.7z" fill="none" stroke="#444" stroke-width="1.2" /><path d="M17.8 79.3h5" fill="none" stroke="#444" stroke-width="1" /><path d="M20 81h9.3v8.9H20z" fill="#fff" stroke="#444" stroke-width="1.3" /><path d="M21.9 83.8h5.6M21.9 85.6h5.6M21.9 87.5h5.6" fill="none" stroke="#444" stroke-width="1" /><path d="M15.8 108h11v9.3h-11z" fill="none" stroke="#444" stroke-width="1.2" /><path d="M19 106.3h5v2.4h-5z" fill="#444"/><path d="M20 112.3h9.3v8.9H20z" fill="#fff" stroke="#444" stroke-width="1.3" /><path d="M21.9 115h5.6M21.9 116.8h5.6M21.9 118.7h5.6" fill="none" stroke="#444" stroke-width="1" /><path d="M50.3 78.7m-2.1 0a2.1 2.1 0 1 0 4.2 0a2.1 2.1 0 1 0 -4.2 0" fill="none" stroke="#444" stroke-width="1.1" /><path d="M50.3 87.1m-2.1 0a2.1 2.1 0 1 0 4.2 0a2.1 2.1 0 1 0 -4.2 0" fill="none" stroke="#444" stroke-width="1.1" /><path d="M52.1 79.9L64 87.7M52.1 85.9L64 77.8" fill="none" stroke="#444" stroke-width="1.1" /><path d="M47.5 106.5h15.2v13.5h-15.2z" fill="none" stroke="#444" stroke-width="1.1" stroke-dasharray="1.6 1.6"/><path d="M56.6 110.6v10.6l2.5-2.2 2 3.9 1.5-0.8-2-3.8h3.3z" fill="#f1f1f1" stroke="#444" stroke-width="1" /><text x="96" y="119.6" font-size="16" fill="#333" font-weight='bold' textLength="9.2" lengthAdjust="spacingAndGlyphs" >B</text><path d="M124.3 108.6h5.4M121.4 119.3h5.4M127 108.6l-2.9 10.7" fill="none" stroke="#444" stroke-width="1.1" /><path d="M144.6 108v6.3a4.25 4.25 0 0 0 8.5 0V108M143.7 120.4h10.4" fill="none" stroke="#444" stroke-width="1.2" /><path d="M166.6 113.7h14.3" fill="none" stroke="#444" stroke-width="1.2" /><path d="M177.3 109.2c-1.5-1.6-7.3-1.9-7.3 1.2 0 2.4 7.5 3 7.5 6 0 3.2-6.3 3.3-8.4 1.6" fill="none" stroke="#444" stroke-width="1.2" /><path d="M191.6 119.6L196.3 108l4.7 11.6M193.3 115.4h6" fill="none" stroke="#444" stroke-width="1.1" /><text x="201.3" y="120.2" font-size="7.5" fill="#444" font-weight='bold' textLength="4" lengthAdjust="spacingAndGlyphs" >2</text><path d="M211.70000000000002 111.60000000000001 L214.9 114.84 L218.1 111.60000000000001" fill="none" stroke="#555" stroke-width="1.1"/><path d="M228.7 118.6L234.2 108l5.5 10.6M230.6 114.8h7.3" fill="none" stroke="#444" stroke-width="1.1" /><path d="M227 120.9h15.8v2.9H227z" fill="#e20d0d"/><path d="M248.20000000000002 111.60000000000001 L251.4 114.84 L254.6 111.60000000000001" fill="none" stroke="#555" stroke-width="1.1"/><path d="M265.8 113.6l5.6-5.6 6.2 6.2-5.6 5.6z" fill="none" stroke="#444" stroke-width="1.1" /><path d="M268.2 106.3l4.6 4.6" fill="none" stroke="#444" stroke-width="1.1" /><circle cx="277.5" cy="116.8" r="1.25" fill="#333"/><path d="M262.6 121h17.2v3h-17.2z" fill="#f4f000"/><path d="M284.40000000000003 111.60000000000001 L287.6 114.84 L290.8 111.60000000000001" fill="none" stroke="#555" stroke-width="1.1"/><path d="M301.8 107.9h12.3v12H301.8z" fill="none" stroke="#444" stroke-width="1.2" /><path d="M307.9 109.5v9M303.5 113.9h8.8" fill="none" stroke="#999" stroke-width="1" stroke-dasharray="1 1"/><path d="M321.6 111.60000000000001 L324.8 114.84 L328.0 111.60000000000001" fill="none" stroke="#555" stroke-width="1.1"/><path d="M252.7 88.8l4.7-11.6 4.7 11.6M254.5 84.4h5.8" fill="none" stroke="#444" stroke-width="1.1" /><path d="M260.8 79.1l2.2-2.3 2.2 2.3z" fill="#444"/><path d="M277.4 88.8l3.9-9.6 3.9 9.6M278.9 85.2h4.8" fill="none" stroke="#444" stroke-width="1.1" /><path d="M284.5 77h4.5l-2.25 2.6z" fill="#444"/><path d="M299.6 89.2l5-13 5 13M301.6 84.4h6" fill="none" stroke="#444" stroke-width="1.2" /><text x="310.4" y="89.3" font-size="11" fill="#444" textLength="6.2" lengthAdjust="spacingAndGlyphs" >a</text><path d="M321.5 81.7 L324.7 84.94 L327.9 81.7" fill="none" stroke="#555" stroke-width="1.1"/><path d="M359.1 76.4h12.8M359.1 78.4h12.8" fill="none" stroke="#444" stroke-width="1.1" /><path d="M365.5 80v9.5M362.9 82.6l2.6-2.6 2.6 2.6" fill="none" stroke="#444" stroke-width="1.1" /><path d="M387 81.6h13.2M387 83.5h13.2" fill="none" stroke="#444" stroke-width="1.1" /><path d="M393.6 75.4v5.3M393.6 84.4v5.8M391.5 78.6l2.1 2.1 2.1-2.1M391.5 86.5l2.1-2.1 2.1 2.1" fill="none" stroke="#444" stroke-width="1.1" /><rect x="412.1" y="72.2" width="21.8" height="21.5" rx="1.2" fill="#7e878e"/><path d="M423 76v10.4M420.4 83.9l2.6 2.6 2.6-2.6M416.3 87.6h13.5M416.3 89.4h13.5" fill="none" stroke="#fff" stroke-width="1.1" /><text x="444" y="82.6" font-size="7.6" fill="#444" font-weight='bold' textLength="10.6" lengthAdjust="spacingAndGlyphs" >AB</text><path d="M455 80.9c4.5-0.6 5.5 5.6 0.5 5.6h-4M453.4 84.5l-2 2 2 2" fill="none" stroke="#444" stroke-width="1.1" /><text x="472.5" y="86" font-size="7.6" fill="#444" font-weight='bold' textLength="10.6" lengthAdjust="spacingAndGlyphs" transform="rotate(-45 477.5 81)">AB</text><path d="M478.6 89.2l7.2-6.6" fill="none" stroke="#444" stroke-width="1.1" /><path d="M487.6 80.6l-1 4.4-3.3-3.2z" fill="#444"/><path d="M493.3 81.7 L496.5 84.94 L499.7 81.7" fill="none" stroke="#555" stroke-width="1.1"/><path d="M359.1 108.4h13M359.1 111.1h8.6M359.1 113.8h11M359.1 116.5h8.6M359.1 119.3h13" fill="none" stroke="#444" stroke-width="1.2" /><path d="M387.2 108.4h13M389.5 111.1h8.399999999999999M388.2 113.8h11M389.5 116.5h8.399999999999999M387.2 119.3h13" fill="none" stroke="#444" stroke-width="1.2" /><path d="M416.6 108.4h13M421.0 111.1h8.6M418.6 113.8h11M421.0 116.5h8.6M416.6 119.3h13" fill="none" stroke="#444" stroke-width="1.2" /><path d="M445 108.4h13M445 111.1h13M445 113.8h13M445 116.5h13M445 119.3h13" fill="none" stroke="#444" stroke-width="1.2" /><path d="M473.3 108.3h14.7v11.2h-14.7zM473.3 110.7h14.7M473.3 117.1h14.7" fill="none" stroke="#444" stroke-width="1.1" /><path d="M475.8 113.9h9.8M477.6 112.2l-1.8 1.7 1.8 1.7M483.8 112.2l1.8 1.7-1.8 1.7" fill="none" stroke="#444" stroke-width="1" /><path d="M493.3 112.0 L496.5 115.24 L499.7 112.0" fill="none" stroke="#555" stroke-width="1.1"/><path d="M543.1 77.6v-2.1H532.2l6.3 7.5-6.3 7.5h10.9v-2.1" fill="none" stroke="#444" stroke-width="1.2" /><path d="M550.9 80.60000000000001 L554.1 83.84 L557.3000000000001 80.60000000000001" fill="none" stroke="#555" stroke-width="1.1"/><path d="M529.6 113.8l3.5-5.3h12.4v10.8H533.1z" fill="none" stroke="#444" stroke-width="1.1" /><circle cx="533.6" cy="113.8" r="0.9" fill="#444"/><path d="M538.2 111h4.8M538.2 113.8h4.8M538.2 116.6h4.8" fill="none" stroke="#444" stroke-width="1.1" /><path d="M550.9 112.5 L554.1 115.74 L557.3000000000001 112.5" fill="none" stroke="#555" stroke-width="1.1"/><text x="588.2" y="81" font-size="8.6" fill="#444" font-weight='bold' textLength="6" lengthAdjust="spacingAndGlyphs" >A</text><text x="588.3" y="90.8" font-size="8.6" fill="#444" font-weight='bold' textLength="5.8" lengthAdjust="spacingAndGlyphs" >Z</text><path d="M599.5 74.5v15.6M596.7 87.3l2.8 2.8 2.8-2.8" fill="none" stroke="#444" stroke-width="1.1" /><text x="623" y="81" font-size="8.6" fill="#444" font-weight='bold' textLength="5.8" lengthAdjust="spacingAndGlyphs" >Z</text><text x="622.9" y="90.8" font-size="8.6" fill="#444" font-weight='bold' textLength="6" lengthAdjust="spacingAndGlyphs" >A</text><path d="M634.3 74.5v15.6M631.5 87.3l2.8 2.8 2.8-2.8" fill="none" stroke="#666" stroke-width="1.1" /><path d="M588.4 108.3h12l-4.6 5.3v5.8h-2.8v-5.8z" fill="#2f2f2f"/><path d="M622.7 107.6h11.1l-4.3 5v6h-2.5v-6z" fill="#9a9a9a"/><path d="M634.6 116.2l3.6 3.6M638.2 116.2l-3.6 3.6" fill="none" stroke="#9a9a9a" stroke-width="1" /><text x="668.8" y="120.4" font-size="16.5" fill="#444" textLength="12.2" lengthAdjust="spacingAndGlyphs" >%</text><path d="M701.6 111.2v8.2h12.6v-2" fill="none" stroke="#444" stroke-width="1.1" /><path d="M704.4 108h13.4v8.6h-13.4z" fill="#333"/><ellipse cx="711.1" cy="112.3" rx="4.3" ry="2.6" fill="#f1f1f1"/><circle cx="711.1" cy="112.3" r="1.2" fill="#333"/><path d="M722.9 112.0 L725.5 114.7 L728.1 112.0" fill="none" stroke="#555" stroke-width="1.1"/><text x="743.6" y="114" font-size="10" fill="#444" textLength="8" lengthAdjust="spacingAndGlyphs" >.0</text><path d="M736.6 118.5h14.6M739 116.1l-2.4 2.4 2.4 2.4" fill="none" stroke="#444" stroke-width="1.1" /><text x="770.3" y="114" font-size="10" fill="#444" textLength="12.4" lengthAdjust="spacingAndGlyphs" >.00</text><path d="M770.2 117.6h14.4M782.2 115.2l2.4 2.4-2.4 2.4" fill="none" stroke="#444" stroke-width="1.1" /><path d="M819.2 79.2h11v11h-11zM822.87 79.2v11M826.5300000000001 79.2v11M819.2 82.87h11M819.2 86.53h11" fill="none" stroke="#444" stroke-width="1.05" /><path d="M815 78.2h6.2M818.1 75.1v6.2" fill="none" stroke="#444" stroke-width="1.2" /><path d="M836.3 81.7 L839.5 84.94 L842.7 81.7" fill="none" stroke="#555" stroke-width="1.1"/><path d="M819.2 109.2h11v11h-11zM822.87 109.2v11M826.5300000000001 109.2v11M819.2 112.87h11M819.2 116.53h11" fill="none" stroke="#444" stroke-width="1.05" /><path d="M815 108.5h6.2" fill="none" stroke="#444" stroke-width="1.2" /><path d="M836.3 112.2 L839.5 115.44 L842.7 112.2" fill="none" stroke="#555" stroke-width="1.1"/><path d="M874.2 86.6l7.3-7.4c0.9-0.9 2-0.9 2.9 0l3.1 3.1c0.9 0.9 0.9 2 0 2.9l-5 5h-5.7l-2.6-2.7c-0.6-0.6-0.6-0.6 0-0.9z" fill="none" stroke="#444" stroke-width="1.1" /><path d="M882.6 89.9h6.4" fill="none" stroke="#444" stroke-width="1.1" /><path d="M893.8 81.5 L897 84.74 L900.2 81.5" fill="none" stroke="#555" stroke-width="1.1"/><path d="M907.5 76h11v11h-11zM907.5 79.5h11M907.5 83h6" fill="none" stroke="#444" stroke-width="1.1" /><path d="M907.5 83.5h5.5v3.5h-5.5z" fill="#777"/><path d="M913.3 82.8h9v8h-9z" fill="#f1f1f1" stroke="#444" stroke-width="1.1" /><path d="M916 84.6l3 2.2-3 2.2" fill="none" stroke="#444" stroke-width="1" /><path d="M927.8 81.5 L931 84.74 L934.2 81.5" fill="none" stroke="#555" stroke-width="1.1"/><path d="M874.5 106.7h12.5v4.2h-12.5z" fill="none" stroke="#444" stroke-width="1.1" /><path d="M875.5 109.2v3.3h5.3v1.3" fill="none" stroke="#444" stroke-width="1.1" /><path d="M879.6 113.6h2.5v8h-2.5z" fill="#333"/><path d="M906.8 108.8h16v11.6h-16zM912.1 108.8v11.6M917.5 108.8v11.6M906.8 114.6h16M906.8 117.5h16" fill="none" stroke="#444" stroke-width="1" /><path d="M906.8 108.8h16v2.6h-16z" fill="#444"/><path d="M927.8 112.2 L931 115.44 L934.2 112.2" fill="none" stroke="#555" stroke-width="1.1"/><path d="M1303.6 94.6l7.4 7 7.4-7" fill="none" stroke="#666" stroke-width="1.2" /><path d="M20.5 168.5m-5.9 0a5.9 5.9 0 1 0 11.8 0a5.9 5.9 0 1 0 -11.8 0M24.8 172.8l4.3 4.3" fill="none" stroke="#444" stroke-width="1.3" /><path d="M12.6 204.6h17v11.6h-10l-2.1 2.9-2.1-2.9h-2.8z" fill="none" stroke="#444" stroke-width="1.2" /><path d="M15.6 207.6h11M15.6 209.9h11M15.6 212.2h6" fill="none" stroke="#555" stroke-width="1" /><circle cx="27.6" cy="216.7" r="5" fill="#f9dd4a"/><path d="M25 215.8h5.3M25 217.8h5.3" fill="none" stroke="#5a4a00" stroke-width="1" /><path d="M12.6 257.6v-11h14.4v4" fill="none" stroke="#444" stroke-width="1.2" /><path d="M16.6 250.8h13.4v9.4h-1.2l1.2 2-3-2h-10.4z" fill="none" stroke="#444" stroke-width="1.2" /><circle cx="20.6" cy="255.4" r="0.8" fill="#444"/><circle cx="23.3" cy="255.4" r="0.8" fill="#444"/><circle cx="26" cy="255.4" r="0.8" fill="#444"/><text x="12.6" y="296.6" font-size="9.8" fill="#3a3a3a" textLength="16" lengthAdjust="spacingAndGlyphs" stroke="#444" stroke-width="0.3">ABC</text><path d="M19.6 297.6l3 3.6 7-7.4" fill="none" stroke="#444" stroke-width="1.4" /><path d="M21.4 338m-8.2 0a8.2 8.2 0 1 0 16.4 0a8.2 8.2 0 1 0 -16.4 0" fill="none" stroke="#444" stroke-width="1.1" /><path d="M21.4 336.4v6" fill="none" stroke="#444" stroke-width="1.2" /><circle cx="21.4" cy="333.9" r="0.8" fill="#444"/><path d="M1374 167h9.5v5.5h-9.5z" fill="#c3c7cb"/><path d="M1370.6 163.6h16v12h-16zM1370.6 166.6h16M1370.6 172.6h16M1373.6 163.6v12M1383.6 163.6v12" fill="none" stroke="#f4f4f4" stroke-width="1.1" /><path d="M1370.5 206h16v11.5h-16zM1375.8 206v11.5M1381.2 206v11.5M1370.5 209.8h16M1370.5 213.6h16" fill="none" stroke="#a8a8a8" stroke-width="1.1" /><path d="M1371 257v-9.8h8.6" fill="none" stroke="#a8a8a8" stroke-width="1.1" /><path d="M1379.9 255.3m-5.6 0a5.6 5.6 0 1 0 11.2 0a5.6 5.6 0 1 0 -11.2 0" fill="#f1f1f1" stroke="#a8a8a8" stroke-width="1.1" /><path d="M1371.2 288.3h14.3v13.8h-14.3zM1371.2 299.5l4.5-5 3.3 3.2 2.8-2.4 3.7 3.3" fill="none" stroke="#a8a8a8" stroke-width="1.1" /><path d="M1374.8 291.6m-1.2 0a1.2 1.2 0 1 0 2.4 0a1.2 1.2 0 1 0 -2.4 0" fill="none" stroke="#a8a8a8" stroke-width="0.9" /><path d="M1371.4 339.4h3.2v5.6h-3.2zM1376.6 334.6h3.2v10.4h-3.2zM1381.8 330.6h3.2v14.4h-3.2z" fill="none" stroke="#a8a8a8" stroke-width="1.1" /><text x="1372.3" y="387" font-size="15.5" fill="#a0a0a0" font-weight='bold' textLength="10" lengthAdjust="spacingAndGlyphs" >¶</text><text x="1371.8" y="424.4" font-size="12.5" fill="#a8a8a8" textLength="12.6" lengthAdjust="spacingAndGlyphs" >Ta</text><path d="M1372.4 431.5c2.5-3 8.5-3 11.4 0" fill="none" stroke="#a8a8a8" stroke-width="1.1" /><path d="M1371.4 461h3.6v10h-3.6zM1377.6 456.4h7.6v3.6h-7.6zM1371.4 456.4h3.6v2.6h-3.6z" fill="none" stroke="#a8a8a8" stroke-width="1.1" /><path d="M1377.8 470.2c2 1 5.6 0.4 6.6-3.6M1384.8 464.6v2.6l-2.4-0.6" fill="none" stroke="#a8a8a8" stroke-width="1.1" /><path d="M1371.4 498.2h12.6v12.6h-12.6zM1373.6 501.2h8.4M1373.6 504.2h8.4M1373.6 507.2h5.4" fill="none" stroke="#a8a8a8" stroke-width="1.1" /><path d="M1378.6 508.8h7.4l-3.3 3.6v3.4h-1v-3.4z" fill="#9a9a9a"/><path d="M1134.4 309.2v13M1147.4 309.2v13M1134.4 309.2h13M1134.4 322.2h13M1140.9 309.2v13M1134.4 315.7h13" fill="none" stroke="#444" stroke-width="1.2" /><path d="M1161.0 309.2v13M1174.0 309.2v13M1161.0 309.2h13M1161.0 322.2h13M1167.5 309.2v13M1161.0 315.7h13" fill="none" stroke="#aaa" stroke-width="1" stroke-dasharray="1 1"/><path d="M1188.3 309.2v13M1201.3 309.2v13M1188.3 309.2h13M1188.3 322.2h13" fill="none" stroke="#aaa" stroke-width="1" stroke-dasharray="1 1"/><path d="M1194.8 309.2v13M1188.3 315.7h13" fill="none" stroke="#444" stroke-width="1.2" /><path d="M1221.6 309.2v13M1215.1 315.7h13" fill="none" stroke="#aaa" stroke-width="1" stroke-dasharray="1 1"/><path d="M1215.1 309.2v13M1228.1 309.2v13M1215.1 309.2h13M1215.1 322.2h13" fill="none" stroke="#444" stroke-width="1.2" /><path d="M1241.4 309.2v13M1254.4 309.2v13M1241.4 309.2h13M1241.4 322.2h13" fill="none" stroke="#aaa" stroke-width="1" stroke-dasharray="1 1"/><path d="M1241.4 322.2L1254.4 309.2" fill="none" stroke="#444" stroke-width="1.2" /><path d="M1268.0 309.2v13M1281.0 309.2v13M1268.0 309.2h13M1268.0 322.2h13" fill="none" stroke="#aaa" stroke-width="1" stroke-dasharray="1 1"/><path d="M1268.0 309.2L1281.0 322.2" fill="none" stroke="#444" stroke-width="1.2" /><path d="M1147.4 340.9v13M1134.4 340.9h13M1134.4 353.9h13M1140.9 340.9v13M1134.4 347.4h13" fill="none" stroke="#aaa" stroke-width="1" stroke-dasharray="1 1"/><path d="M1134.4 340.9v13" fill="none" stroke="#444" stroke-width="1.2" /><path d="M1161.0 340.9v13M1174.0 340.9v13M1161.0 340.9h13M1161.0 353.9h13M1161.0 347.4h13" fill="none" stroke="#aaa" stroke-width="1" stroke-dasharray="1 1"/><path d="M1167.5 340.9v13" fill="none" stroke="#444" stroke-width="1.2" /><path d="M1188.3 340.9v13M1188.3 340.9h13M1188.3 353.9h13M1194.8 340.9v13M1188.3 347.4h13" fill="none" stroke="#aaa" stroke-width="1" stroke-dasharray="1 1"/><path d="M1201.3 340.9v13" fill="none" stroke="#444" stroke-width="1.2" /><path d="M1215.1 340.9v13M1228.1 340.9v13M1215.1 353.9h13M1221.6 340.9v13M1215.1 347.4h13" fill="none" stroke="#aaa" stroke-width="1" stroke-dasharray="1 1"/><path d="M1215.1 340.9h13" fill="none" stroke="#444" stroke-width="1.2" /><path d="M1241.4 340.9v13M1254.4 340.9v13M1241.4 340.9h13M1241.4 353.9h13M1247.9 340.9v13" fill="none" stroke="#aaa" stroke-width="1" stroke-dasharray="1 1"/><path d="M1241.4 347.4h13" fill="none" stroke="#444" stroke-width="1.2" /><path d="M1268.0 340.9v13M1281.0 340.9v13M1268.0 340.9h13M1274.5 340.9v13M1268.0 347.4h13" fill="none" stroke="#aaa" stroke-width="1" stroke-dasharray="1 1"/><path d="M1268.0 353.9h13" fill="none" stroke="#444" stroke-width="1.2" /><path d="M1133.4 595h12v11h-12zM1133.4 598.4h12M1133.4 602h6" fill="none" stroke="#444" stroke-width="1.1" /><path d="M1133.4 602.3h5.8v3.7h-5.8z" fill="#777"/><path d="M1139.4 601.8h9v8.3h-9z" fill="#f1f1f1" stroke="#444" stroke-width="1.1" /><path d="M1142.2 603.6l3 2.2-3 2.2" fill="none" stroke="#444" stroke-width="1" /><path d="M845 652.2m-17.2 0a17.2 17.2 0 1 0 34.4 0a17.2 17.2 0 1 0 -34.4 0" fill="none" stroke="#cde5ed" stroke-width="1.3" /><path d="M885.2 652.2m-17.2 0a17.2 17.2 0 1 0 34.4 0a17.2 17.2 0 1 0 -34.4 0" fill="none" stroke="#cde5ed" stroke-width="1.3" /><path d="M836 668.2c8 3.5 18 2 24-7l11-15.5c4-6 9-10.5 14.5-11.5" fill="none" stroke="#cde5ed" stroke-width="3.2" /><path d="M862 660l11 -14" fill="none" stroke="#fff" stroke-width="0.6" /><path d="M839.5 639c3-2.5 10-3 14-0.5l0.5 3.5c-2 1.2-3.5 2.8-4 5-0.8 2-2.5 3-4.5 3.2-1.5-1.5-2.5-3-3.5-4.8-1.2-2.2-2.5-4-2.5-6.4z" fill="#cde5ed"/><path d="M845.5 652.2c2.2-0.8 5-0.2 6.8 1.8 0.6 2.4-0.8 4.6-2 6.6-0.8 1.8-1.6 3.4-2.8 4.6-0.6-2-0.8-4-1.2-6-0.4-2.2-1.6-4.2-0.8-7z" fill="#cde5ed"/><path d="M872.5 640.2c4-2.6 11-3.4 18-3 5 0.6 9.6 2.6 11.2 6.4 0.4 2.4-1.2 4-3 5.2-2.4 1.2-3.2 3.6-5.2 5-1.6 0.6-2.6-1.2-4-2-2-0.8-4.4-0.6-6.4-1.4-3.2-0.4-6.4-0.2-8.8-1.6-1.6-2.6-2.6-5.6-1.8-8.6z" fill="#cde5ed"/><path d="M873.5 649.6c2.4-0.6 5.6-0.4 8.2 0.8 1.6 1.2 1.6 3.4 0.8 5.2-1 2.2-1.6 4.6-3 6.6-1 0.8-1.8-0.6-2.2-1.8-0.8-2-1.2-4.2-2.6-5.8-1-1.6-1.6-3.2-1.2-5z" fill="#cde5ed"/><path d="M894.5 659.5c1.6-1 4-0.8 5.4 0.4 0.4 1.6-0.6 3-2 3.6-1.6 0.4-3.2-0.4-3.6-1.8z" fill="#cde5ed"/><path d="M917.6 634.8V669M927.7 669V636.5h10.5c6.5 0 10 3.8 10 8.4s-3.5 8.4-10 8.4h-10.5M938.5 653.3L949 669M957.7 669V636.5h16.4M957.7 651.5h15.9M957.7 667.3h16.6M983.3 669V635.5L1007 668V634.8M1014.5 669L1030 635.5 1045.5 669M1020 656.2h20" fill="none" stroke="#e0e0e0" stroke-width="3.4" stroke-linejoin="bevel"/><text x="827" y="686.6" font-size="11" fill="#d3e7ee" textLength="219" lengthAdjust="spacingAndGlyphs">International Renewable Energy Agency</text></svg>
</body></html>
